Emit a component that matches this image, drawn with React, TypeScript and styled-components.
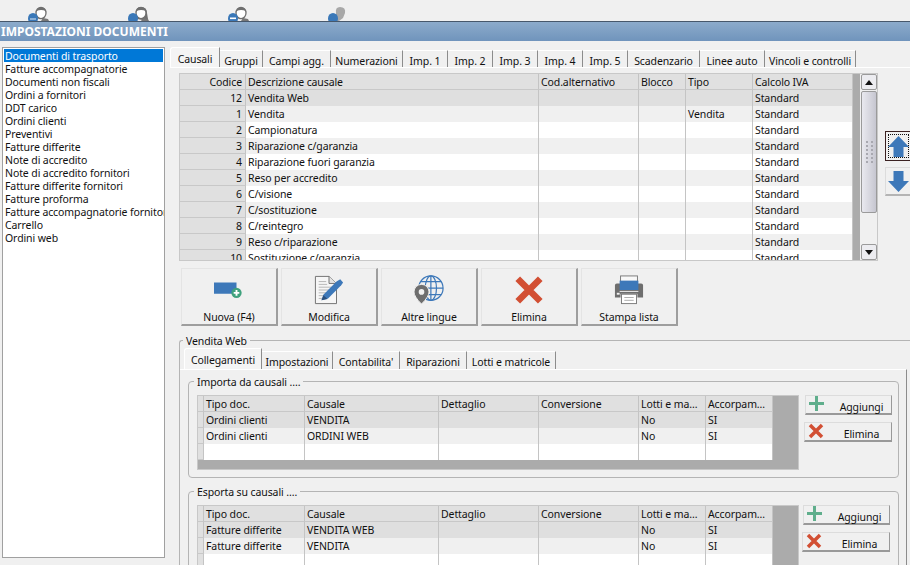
import React from 'react';
import styled, { createGlobalStyle } from 'styled-components';

const Global = createGlobalStyle`
    html, body { margin: 0; padding: 0; background: #f0f0f0; }
    body { font-family: "Noto Sans", "Liberation Sans", sans-serif; font-size: 10.5px; letter-spacing: -0.1px; color: #111; }
`;

const Page = styled.div`
    width: 910px;
    height: 565px;
    overflow: hidden;
    background: #f0f0f0;
`;

const TopBar = styled.div`
    height: 21px;
    display: flex;
    padding-left: 27px;
    gap: 78px;
    overflow: hidden;
`;

const TitleBar = styled.div`
    height: 19px;
    border-top: 1px solid #47586b;
    background: linear-gradient(#8cabcb, #7094bc);
    color: #fff;
    font-size: 12px;
    letter-spacing: 0;
    font-weight: 700;
    line-height: 19px;
    padding-left: 1px;
    white-space: nowrap;
`;

const Body = styled.div`
    display: flex;
    height: 524px;
`;

const DocList = styled.ul`
    list-style: none;
    margin: 6px 0 0 2px;
    padding: 1px;
    width: 159px;
    height: 507px;
    background: #fff;
    border: 1px solid #a0a0a0;
    overflow: hidden;
    flex: none;
`;

const DocItem = styled.li<{ $active?: boolean }>`
    height: 13px;
    box-sizing: border-box;
    line-height: 13px;
    padding: 1px 0 0 1px;
    white-space: nowrap;
    background: ${p => (p.$active ? '#0078d7' : 'transparent')};
    color: ${p => (p.$active ? '#fff' : '#111')};
`;

const Main = styled.div`
    margin-left: 5px;
    width: 741px;
    flex: none;
    overflow: hidden;
`;

const TabStrip = styled.div<{ $top: number; $left: number; $height: number }>`
    display: flex;
    align-items: flex-end;
    margin: ${p => p.$top}px 0 0 ${p => p.$left}px;
    height: ${p => p.$height}px;
`;

const Tab = styled.div<{ $w: number; $active?: boolean }>`
    width: ${p => p.$w}px;
    height: ${p => (p.$active ? '100%' : 'calc(100% - 3px)')};
    flex: none;
    box-sizing: border-box;
    text-align: center;
    line-height: ${p => (p.$active ? '23px' : '20px')};
    white-space: nowrap;
    border-top: 1px solid #fff;
    border-left: ${p => (p.$active ? '1px solid #fff' : 'none')};
    border-right: 1px solid #8c8c8c;
    border-top-left-radius: ${p => (p.$active ? '3px' : '0')};
    background: ${p => (p.$active ? '#f4f4f4' : '#f0f0f0')};
`;

const Content = styled.div`
    border-top: 1px solid #fff;
    padding-top: 5px;
`;

const GridRow = styled.div`
    display: flex;
    margin-left: 9px;
`;

const GridFrame = styled.div`
    display: flex;
    width: 697px;
    height: 186px;
    border: 1px solid #c8c8c8;
    flex: none;
    overflow: hidden;
`;

const Table = styled.div`
    flex: none;
    overflow: hidden;
`;

const Row = styled.div<{ $cols: string; $bg: string }>`
    display: grid;
    grid-template-columns: ${p => p.$cols};
    height: 16px;
    background: ${p => p.$bg};
`;

const Cell = styled.div<{ $head?: boolean; $num?: boolean }>`
    box-sizing: border-box;
    height: 16px;
    line-height: 17px;
    padding: 0 2px;
    white-space: nowrap;
    overflow: hidden;
    text-align: ${p => (p.$num ? 'right' : 'left')};
    border-right: 1px solid #c4c4c4;
    border-bottom: ${p => (p.$head ? '1px solid #c8c8c8' : 'none')};
    background: ${p => (p.$head ? '#e0e0e0' : 'transparent')};
    ${p => (p.$num ? 'background: #e0e0e0; border-bottom: 1px solid #c8c8c8; padding-right: 3px;' : '')}
`;

const Strip = styled.div<{ $w: number }>`
    width: ${p => p.$w}px;
    flex: none;
    background: #ababab;
`;

const ScrollBar = styled.div`
    width: 16px;
    margin-left: 1px;
    flex: none;
    display: flex;
    flex-direction: column;
    background: #f0f0f0;
`;

const ScrollBtn = styled.div`
    height: 16px;
    flex: none;
    box-sizing: border-box;
    border: 1px solid #9a9a9a;
    border-radius: 2px;
    background: #ececf0;
    display: flex;
    align-items: center;
    justify-content: center;
`;

const Thumb = styled.div`
    height: 122px;
    margin: 1px 0 0;
    box-sizing: border-box;
    border: 1px solid #9a9a9a;
    border-radius: 2px;
    background: linear-gradient(90deg, #e9e9ef, #d8d8e0 50%, #c6c6d0);
    display: flex;
    align-items: center;
    justify-content: center;
`;

const ScrollGap = styled.div`
    flex: 1;
`;

const ArrowCol = styled.div`
    margin: 58px 0 0 7px;
    display: flex;
    flex-direction: column;
    gap: 6px;
`;

const ArrowBtn = styled.div<{ $focus?: boolean }>`
    width: 27px;
    height: ${p => (p.$focus ? 30 : 29)}px;
    box-sizing: border-box;
    border: 1px solid ${p => (p.$focus ? '#3a2020' : '#dcdcdc')};
    ${p => (p.$focus ? '' : 'border-bottom: 2px solid #b4b4b4;')}
    background: #f0f0f0;
    display: flex;
    align-items: center;
    justify-content: center;
    padding: 2px;
`;

const FocusRing = styled.div<{ $on?: boolean }>`
    width: 100%;
    height: 100%;
    box-sizing: border-box;
    border: 1px ${p => (p.$on ? 'dotted #111' : 'solid transparent')};
    display: flex;
    align-items: center;
    justify-content: center;
`;

const Toolbar = styled.div`
    display: flex;
    gap: 3px;
    margin: 7px 0 0 11px;
`;

const BigButton = styled.button`
    width: 97px;
    height: 58px;
    padding: 6px 0 0;
    background: #f0f0f0;
    border: 1px solid #e4e4e4;
    border-right: 2px solid #9e9e9e;
    border-bottom: 2px solid #9e9e9e;
    font: inherit;
    letter-spacing: inherit;
    color: #111;
    display: flex;
    flex-direction: column;
    align-items: center;
    gap: 5px;
`;

const Outer = styled.fieldset`
    margin: 8px 0 0 9px;
    padding: 1px 0 0;
    min-width: 0;
    border: none;
    border-top: 1px solid #b4b4b4;
    border-left: 1px solid #b4b4b4;
    border-top-left-radius: 3px;
`;

const Legend = styled.legend<{ $left: number }>`
    margin-left: ${p => p.$left}px;
    padding: 0 3px;
    height: 13px;
    line-height: 15px;
`;

const TabPanel = styled.div`
    width: 727px;
    height: 200px;
    box-sizing: border-box;
    border-top: 1px solid #fff;
    border-right: 1px solid #8c8c8c;
    padding: 5px 0 0 8px;
`;

const Group = styled.fieldset<{ $h: number; $mt: number }>`
    margin: ${p => p.$mt}px 0 0;
    padding: 7px 0 0 8px;
    width: 711px;
    height: ${p => p.$h}px;
    box-sizing: border-box;
    min-width: 0;
    border: 1px solid #b4b4b4;
    border-radius: 4px;
    display: flex;
`;

const GroupInner = styled.div`
    display: flex;
    align-items: flex-start;
`;

const SubFrame = styled.div`
    width: 600px;
    height: 73px;
    display: flex;
    border: 1px solid #c8c8c8;
    flex: none;
`;

const SubTable = styled.div`
    display: flex;
    flex-direction: column;
`;

const SubBottom = styled.div`
    flex: 1;
    background: #ababab;
`;

const SideCol = styled.div<{ $left: number }>`
    margin-left: ${p => p.$left}px;
    width: 88px;
    display: flex;
    flex-direction: column;
    align-items: flex-end;
    gap: 7px;
`;

const SmallButton = styled.button<{ $w: number }>`
    width: ${p => p.$w}px;
    height: 20px;
    padding: 0 0 0 3px;
    background: #f0f0f0;
    border: 1px solid #dcdcdc;
    border-right: 1px solid #999;
    border-bottom: 2px solid #999;
    font: inherit;
    letter-spacing: inherit;
    color: #111;
    display: flex;
    align-items: flex-start;
`;

const SmallLabel = styled.span`
    flex: 1;
    text-align: center;
    padding: 4px 0 0 8px;
`;

const DOCS = [
    'Documenti di trasporto', 'Fatture accompagnatorie', 'Documenti non fiscali', 'Ordini a fornitori',
    'DDT carico', 'Ordini clienti', 'Preventivi', 'Fatture differite', 'Note di accredito',
    'Note di accredito fornitori', 'Fatture differite fornitori', 'Fatture proforma',
    'Fatture accompagnatorie fornitori', 'Carrello', 'Ordini web',
];

const TOP_TABS: [string, number][] = [
    ['Causali', 50], ['Gruppi', 43], ['Campi agg.', 68], ['Numerazioni', 72], ['Imp. 1', 45], ['Imp. 2', 45],
    ['Imp. 3', 45], ['Imp. 4', 45], ['Imp. 5', 45], ['Scadenzario', 72], ['Linee auto', 65], ['Vincoli e controlli', 91],
];

const SUB_TABS: [string, number][] = [
    ['Collegamenti', 78], ['Impostazioni', 71], ["Contabilita'", 67], ['Riparazioni', 67], ['Lotti e matricole', 89],
];

const CAUSALI = [
    ['12', 'Vendita Web', ''], ['1', 'Vendita', 'Vendita'], ['2', 'Campionatura', ''], ['3', 'Riparazione c/garanzia', ''],
    ['4', 'Riparazione fuori garanzia', ''], ['5', 'Reso per accredito', ''], ['6', 'C/visione', ''], ['7', 'C/sostituzione', ''],
    ['8', 'C/reintegro', ''], ['9', 'Reso c/riparazione', ''], ['10', 'Sostituzione c/garanzia', ''],
];

const MAIN_COLS = '66px 293px 100px 47px 67px 100px';
const SUB_COLS = '6px 101px 134px 100px 100px 67px 67px';
const SUB_HEAD = ['', 'Tipo doc.', 'Causale', 'Dettaglio', 'Conversione', 'Lotti e ma…', 'Accorpam…'];

const rowBg = (i: number) => (i === 0 ? '#dfdfdf' : i % 2 === 1 ? '#f0f0f0' : '#fff');

// variant: 'shirt' white stripe on the blue head, 'hair' long hair, 'solid' flat grey
function Person({ variant }: { variant: 'plain' | 'hair' | 'shirt' | 'solid' }) {
    return (
        <svg width="22" height="21" viewBox="0 0 22 21">
            {variant === 'solid' ? (
                <path d="M9 13 Q8 7 13 7 Q19 7 18 13 L16 18 L12 21 L9 21 Z" fill="#a8a8a8" />
            ) : (
                <>
                    {variant === 'hair' && <path d="M9 12 Q9 7 14 7 Q20 7 20 13 L21 19 L16 20 L10 19 Z" fill="#6f6f6f" />}
                    <path d="M16 18 L21 19 L22 21 L14 21 Z" fill="#777" />
                    <ellipse cx="14" cy="13" rx="5" ry="5.6" fill="#fff" stroke="#6f6f6f" strokeWidth="1.3" />
                    <path d="M9.5 11 Q10 7.4 14 7.4 Q18.5 7.4 19 11 Q14 9 9.5 11 Z" fill="#6f6f6f" />
                </>
            )}
            <ellipse cx="6" cy="18.5" rx="5" ry="5.5" fill="#3a78b8" />
            {variant === 'plain' && <rect x="3" y="18.5" width="6" height="1" fill="#dbe7f3" />}
            {variant === 'shirt' && <rect x="3" y="17.5" width="6" height="1.6" fill="#fff" />}
        </svg>
    );
}

function NewIcon() {
    return (
        <svg width="32" height="32" viewBox="0 0 32 32">
            <rect x="0" y="8" width="24" height="12" fill="#3d78b9" />
            <circle cx="24" cy="19" r="5.5" fill="#3fa17d" />
            <path d="M24 16 V22 M21 19 H27" stroke="#fff" strokeWidth="2" />
        </svg>
    );
}

function EditIcon() {
    return (
        <svg width="32" height="32" viewBox="0 0 32 32">
            <path d="M1.5 1.5 H16 L24 9 V30.5 H1.5 Z" fill="#f6f6f6" stroke="#6e6e6e" />
            <path d="M16 1.5 V9 H24" fill="#e4e4e4" stroke="#6e6e6e" />
            <path d="M5 7 H13 M5 10 H14 M5 13 H20 M5 16 H20 M5 19 H15 M5 22 H12 M5 25 H10" stroke="#b4b4b4" />
            <path d="M10 21 L24 7 L28 4.5 L31 8 L29 11 L15 25 L8 27 Z" fill="#3d78b9" />
            <path d="M8 27 L10 21.5 L14.5 25.5 Z" fill="#2a4f7c" />
        </svg>
    );
}

function GlobeIcon() {
    return (
        <svg width="32" height="32" viewBox="0 0 32 32" fill="none">
            <g stroke="#3d78b9" strokeWidth="1.3">
                <circle cx="18" cy="14" r="13" />
                <ellipse cx="18" cy="14" rx="6" ry="13" />
                <path d="M18 1 V27 M5 14 H31 M7 7 H29 M7 21 H29" />
            </g>
            <path d="M8 31 Q0 23 0 18 A8 8 0 0 1 16 18 Q16 23 8 31 Z" fill="#6e6e6e" stroke="#f0f0f0" />
            <circle cx="8" cy="18" r="3" fill="#f0f0f0" />
        </svg>
    );
}

function CrossIcon({ size }: { size: number }) {
    return (
        <svg width={size} height={size} viewBox="0 0 32 32">
            <path d="M4 4 L28 28 M28 4 L4 28" stroke="#d24f33" strokeWidth="7" />
        </svg>
    );
}

function PlusIcon() {
    return (
        <svg width="15" height="15" viewBox="0 0 15 15">
            <path d="M7.5 0 V15 M0 7.5 H15" stroke="#5fae8c" strokeWidth="3" />
        </svg>
    );
}

function PrinterIcon() {
    return (
        <svg width="32" height="32" viewBox="0 0 32 32">
            <rect x="7" y="1" width="18" height="9" fill="#f8f8f8" stroke="#777" />
            <path d="M3 9 H29 Q31 9 31 11 V24 H25 V20 H7 V24 H1 V11 Q1 9 3 9 Z" fill="#6e6e6e" />
            <rect x="6" y="6" width="20" height="10" fill="#3d78b9" />
            <path d="M6 17.5 H26" stroke="#f4f4f4" />
            <rect x="3" y="19" width="3" height="2" fill="#f4f4f4" />
            <rect x="8" y="20.5" width="16" height="10" fill="#fff" stroke="#777" />
            <path d="M11 24 H21 M11 27 H21" stroke="#aaa" />
        </svg>
    );
}

function BlueArrow({ down }: { down?: boolean }) {
    return (
        <svg width="21" height="21" viewBox="0 0 21 21" style={{ flex: 'none', transform: down ? 'rotate(180deg)' : undefined }}>
            <path d="M10.5 0 L21 11 H15.5 V21 H5.5 V11 H0 Z" fill="#3d78b9" />
        </svg>
    );
}

function Triangle({ down }: { down?: boolean }) {
    return (
        <svg width="8" height="5" viewBox="0 0 8 5">
            <path d={down ? 'M0 0 H8 L4 5 Z' : 'M0 5 H8 L4 0 Z'} fill="#111" />
        </svg>
    );
}

function Grip() {
    return (
        <svg width="7" height="23" viewBox="0 0 7 23" fill="#a8a8b0">
            {[0, 4, 8, 12, 16, 20].map(y => (
                <g key={y}>
                    <rect x="0" y={y} width="2" height="2" />
                    <rect x="5" y={y} width="2" height="2" />
                </g>
            ))}
        </svg>
    );
}

function SubGrid({ rows }: { rows: string[][] }) {
    return (
        <SubFrame>
            <SubTable>
                <Row $cols={SUB_COLS} $bg="#e0e0e0">
                    {SUB_HEAD.map((h, i) => <Cell $head key={i}>{h}</Cell>)}
                </Row>
                {[...rows, ['', '', '', '', '']].map((r, i) => (
                    <Row $cols={SUB_COLS} $bg={rowBg(i)} key={i}>
                        <Cell $num />
                        <Cell>{r[0]}</Cell>
                        <Cell>{r[1]}</Cell>
                        <Cell />
                        <Cell />
                        <Cell>{r[2]}</Cell>
                        <Cell>{r[3]}</Cell>
                    </Row>
                ))}
                <SubBottom />
            </SubTable>
            <Strip $w={25} />
        </SubFrame>
    );
}

function LinkButtons({ left }: { left: number }) {
    return (
        <SideCol $left={left}>
            <SmallButton $w={87}><PlusIcon /><SmallLabel>Aggiungi</SmallLabel></SmallButton>
            <SmallButton $w={88}><CrossIcon size={16} /><SmallLabel>Elimina</SmallLabel></SmallButton>
        </SideCol>
    );
}

export default function App() {
    return (
        <Page>
            <Global />
            <TopBar>
                <Person variant="plain" />
                <Person variant="hair" />
                <Person variant="shirt" />
                <Person variant="solid" />
            </TopBar>
            <TitleBar>IMPOSTAZIONI DOCUMENTI</TitleBar>
            <Body>
                <DocList>
                    {DOCS.map((d, i) => <DocItem $active={i === 0} key={d}>{d}</DocItem>)}
                </DocList>
                <Main>
                    <TabStrip $top={6} $left={0} $height={20}>
                        {TOP_TABS.map(([t, w], i) => <Tab $w={w} $active={i === 0} key={t}>{t}</Tab>)}
                    </TabStrip>
                    <Content>
                        <GridRow>
                            <GridFrame>
                                <Table>
                                    <Row $cols={MAIN_COLS} $bg="#e0e0e0">
                                        <Cell $num $head>Codice</Cell>
                                        <Cell $head>Descrizione causale</Cell>
                                        <Cell $head>Cod.alternativo</Cell>
                                        <Cell $head>Blocco</Cell>
                                        <Cell $head>Tipo</Cell>
                                        <Cell $head>Calcolo IVA</Cell>
                                    </Row>
                                    {CAUSALI.map((r, i) => (
                                        <Row $cols={MAIN_COLS} $bg={rowBg(i)} key={r[0]}>
                                            <Cell $num>{r[0]}</Cell>
                                            <Cell>{r[1]}</Cell>
                                            <Cell />
                                            <Cell />
                                            <Cell>{r[2]}</Cell>
                                            <Cell>Standard</Cell>
                                        </Row>
                                    ))}
                                </Table>
                                <Strip $w={7} />
                                <ScrollBar>
                                    <ScrollBtn><Triangle /></ScrollBtn>
                                    <Thumb><Grip /></Thumb>
                                    <ScrollGap />
                                    <ScrollBtn><Triangle down /></ScrollBtn>
                                </ScrollBar>
                            </GridFrame>
                            <ArrowCol>
                                <ArrowBtn $focus><FocusRing $on><BlueArrow /></FocusRing></ArrowBtn>
                                <ArrowBtn><FocusRing><BlueArrow down /></FocusRing></ArrowBtn>
                            </ArrowCol>
                        </GridRow>
                        <Toolbar>
                            <BigButton><NewIcon />Nuova (F4)</BigButton>
                            <BigButton><EditIcon />Modifica</BigButton>
                            <BigButton><GlobeIcon />Altre lingue</BigButton>
                            <BigButton><CrossIcon size={32} />Elimina</BigButton>
                            <BigButton><PrinterIcon />Stampa lista</BigButton>
                        </Toolbar>
                        <Outer>
                            <Legend $left={3}>Vendita Web</Legend>
                            <TabStrip $top={0} $left={4} $height={21}>
                                {SUB_TABS.map(([t, w], i) => <Tab $w={w} $active={i === 0} key={t}>{t}</Tab>)}
                            </TabStrip>
                            <TabPanel>
                                <Group $mt={0} $h={103}>
                                    <Legend $left={-3}>Importa da causali ....</Legend>
                                    <GroupInner>
                                        <SubGrid rows={[
                                            ['Ordini clienti', 'VENDITA', 'No', 'SI'],
                                            ['Ordini clienti', 'ORDINI WEB', 'No', 'SI'],
                                        ]} />
                                        <LinkButtons left={5} />
                                    </GroupInner>
                                </Group>
                                <Group $mt={7} $h={103}>
                                    <Legend $left={-3}>Esporta su causali ....</Legend>
                                    <GroupInner>
                                        <SubGrid rows={[
                                            ['Fatture differite', 'VENDITA WEB', 'No', 'SI'],
                                            ['Fatture differite', 'VENDITA', 'No', 'SI'],
                                        ]} />
                                        <LinkButtons left={3} />
                                    </GroupInner>
                                </Group>
                            </TabPanel>
                        </Outer>
                    </Content>
                </Main>
            </Body>
        </Page>
    );
}
